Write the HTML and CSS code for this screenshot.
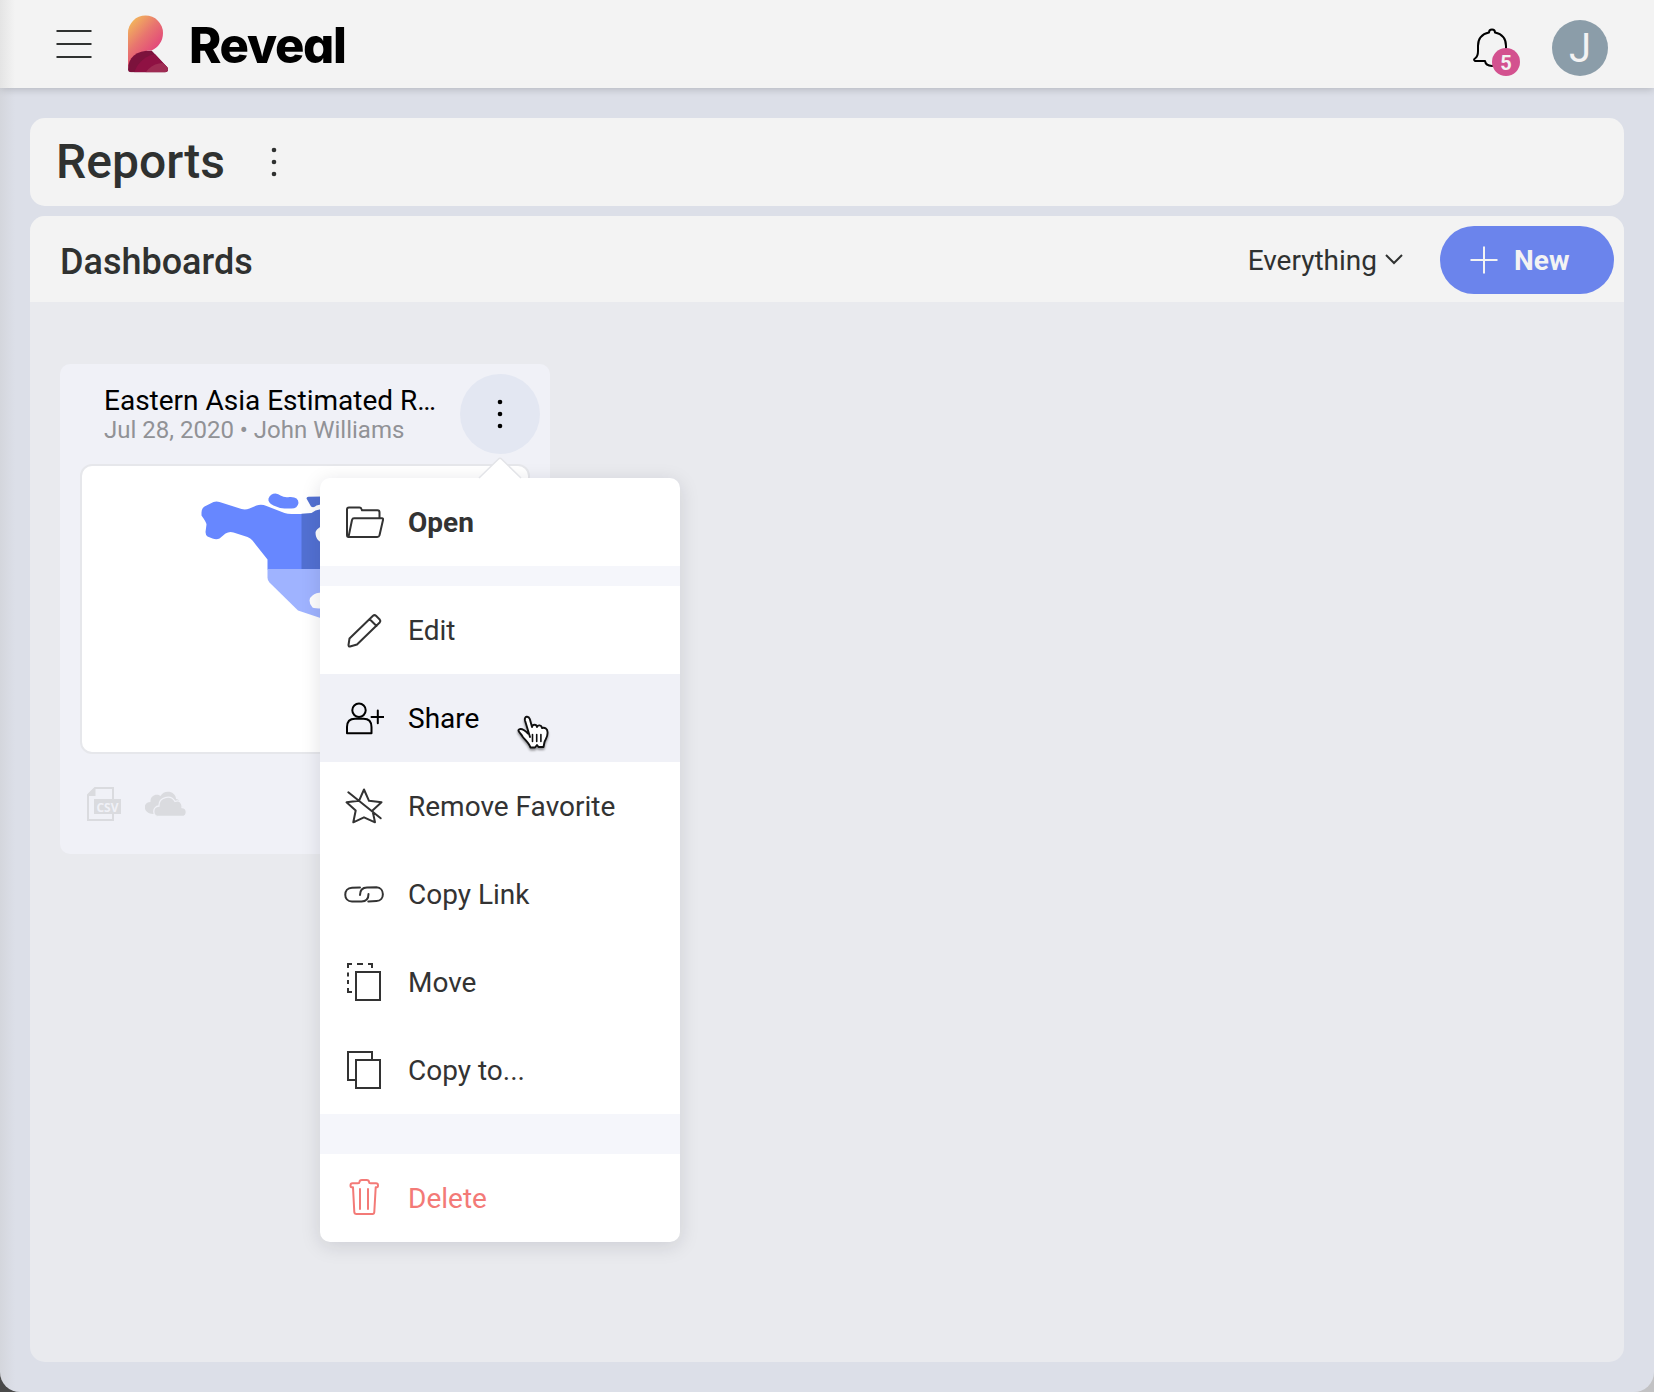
FILE: index.html
```html
<!DOCTYPE html>
<html lang="en">
<head>
<meta charset="utf-8">
<title>Reveal</title>
<link rel="stylesheet" href="styles.css">
</head>
<body>
<div class="window">
  <header class="topbar">
    <svg class="burger" width="36" height="28" viewBox="0 0 36 28" stroke="#2f3130" stroke-width="2"><path d="M.5 1h35M.5 14h35M.5 27h35"/></svg>
    <svg class="logo" width="40" height="58" viewBox="128 14.500 40 58">
      <defs>
        <linearGradient id="head" x1="130" y1="22" x2="158" y2="48" gradientUnits="userSpaceOnUse"><stop offset="0" stop-color="#f2b45c"/><stop offset=".5" stop-color="#e8756f"/><stop offset="1" stop-color="#e2457b"/></linearGradient>
        <clipPath id="leg"><path d="M128 69C128 57 136 50 151.500 50L167 66.500C169 69 168 71.800 165 71.800H131C129 71.800 128 70.500 128 69Z"/></clipPath>
      </defs>
      <path fill="url(#head)" d="M128 69V32.500A17.500 17.500 0 0 1 163 32.500C163 41 158 47 151.500 50C140 50 130 58 128 69Z"/>
      <g clip-path="url(#leg)"><path fill="#7c123c" d="M128 49h41v25h-41z"/><circle cx="160" cy="80" r="27" fill="#8f1143"/><circle cx="163" cy="83" r="20.500" fill="#9e2c53"/></g>
    </svg>
    <span class="brand">Reveal</span>
    <div class="bell">
      <svg width="36" height="42" viewBox="1472 27 36 42" fill="none" stroke="#000" stroke-width="2" stroke-linejoin="round"><path d="M1489 32.500C1489 28.500 1495 28.500 1495 32.500C1502 34 1506 39 1506 46V53C1506 56 1510 58 1510 61H1499C1498 67.500 1486 67.500 1485 61H1475C1473.500 60 1474 59 1475.500 58C1478 56 1478 54 1478 51V46C1478 39 1482 34 1489 32.500Z"/></svg>
      <span class="badge">5</span>
    </div>
    <div class="avatar">J</div>
  </header>

  <main class="content">
    <section class="titlebar">
      <h1>Reports</h1>
      <svg width="6" height="30" viewBox="0 0 6 30" fill="#2f3130"><circle cx="3" cy="3" r="2.300"/><circle cx="3" cy="15" r="2.300"/><circle cx="3" cy="27" r="2.300"/></svg>
    </section>

    <section class="panel">
      <div class="panel-head">
        <h2>Dashboards</h2>
        <span class="filter">Everything</span>
        <svg class="chevron" width="18" height="12" viewBox="0 0 18 12" fill="none" stroke="#2f3130" stroke-width="2"><path d="M1 1l8 8 8-8"/></svg>
        <button class="new"><svg width="28" height="28" viewBox="0 0 28 28" stroke="#f3f3f3" stroke-width="2"><path d="M14 .5v27M.5 14h27"/></svg><span>New</span></button>
      </div>
      <div class="panel-body">
        <article class="card">
          <div class="card-head">
            <div class="card-text">
              <div class="card-title">Eastern Asia Estimated R…</div>
              <div class="card-sub">Jul 28, 2020 • John Williams</div>
            </div>
            <div class="more">
              <svg width="6" height="30" viewBox="0 0 6 30"><circle cx="3" cy="3" r="2.300"/><circle cx="3" cy="15" r="2.300"/><circle cx="3" cy="27" r="2.300"/></svg>
            </div>
          </div>
          <div class="thumb">
            <svg width="446" height="286" viewBox="81.500 465.500 446 286">
              <path fill="#6787ff" d="M201 512Q201 508 204 506L213 501.500Q216 500.500 219 501.500L241 508.500Q245 509.500 249 508L256 505Q261 503.500 266 505.500L284 512.500Q287 513.500 291 513.500H302V569H267V559L252 540Q250 537.500 247 536.500L233 532Q229 530.500 225 533L219 538Q216 539.500 212 538L207 536Q205 534.500 205 531.500L206 524Q206 522 201 515Z"/>
              <path fill="#5270d2" d="M301 513.300L311 512.500 315 510 323 508V569H301Z"/>
              <path fill="#9fb3ff" d="M267 568.500H323V618.500L297.500 610 269 582Q267 580 267 577Z"/>
              <path fill="#6787ff" d="M275 493Q278 493.500 280 495Q284 497.500 289 496.500Q298 496 298 502.500Q297 508 291 508H284Q278 507.500 273 505Q267 502 268 498Q270 493 275 493Z"/>
              <path fill="#5270d2" d="M306 498Q306 496.300 308 496.300L322 496V503.500L316 505Q313 508 310.500 506Z"/>
              <path fill="#fff" d="M322 525Q315 529 315 532Q315 537 318 540L323 544ZM322 592Q315 592 312 595Q309 597 309 600Q309 604 312 607Q314 608 322 608Z"/>
            </svg>
          </div>
          <div class="card-foot">
            <svg width="36" height="36" viewBox="86 786 36 36"><path d="M95 788H113V820H88V795Z" fill="none" stroke="#dadbdf" stroke-width="2"/><path fill="#dadbdf" d="M87 796L95.500 787V796ZM94 799H121V814H94Z"/><text class="csv" x="96.500" y="811.500" textLength="22" lengthAdjust="spacingAndGlyphs">CSV</text></svg>
            <svg width="42" height="28" viewBox="145 790 42 28" fill="#dadbdf"><path d="M153 814C143 814 142 802 150.500 802C150 795 157 793 160.500 796C164 789 176 791 176 799C182 799 187 815 176 815Z"/><path stroke="#f0f1f7" stroke-width="1.300" d="M159 816.500C152 816.500 152 806.500 159 806C158.500 797 171 794 175 801.500C180 799 182.500 804 182 807.500C188 808 187.500 816.500 182 816.500Z"/></svg>
          </div>
          <div class="menu">
            <svg class="arrow" width="44" height="22" viewBox="0 0 44 22"><path d="M1 21L22 .9 43 21V22H1Z" fill="#fff"/><path d="M1 21L20.500 2Q22 .6 23.500 2L43 21" fill="none" stroke="#e3e4e8" stroke-width="1.500"/></svg>
            <div class="item open"><svg viewBox="0 0 40 40"><path d="M3 33V7.500Q3 5.500 5 5.500H15.500Q17 5.500 17.500 7L18 8.300H33.500Q35.500 8.300 35.500 10.500V16.300M4.500 35L8 18Q8.500 16.300 10 16.300H38Q39.500 16.300 39 18L35.500 33.300Q35 35 33.300 35H4.500Q3 35 3 33"/></svg><span>Open</span></div>
            <div class="gap"></div>
            <div class="item"><svg viewBox="0 0 40 40"><path d="M5.500 28.500L29 5.800Q30.500 4.500 32 5.800L35.700 9.500Q37 11 35.700 12.500L13 34.500 6 36.500Q4.500 36.700 4.500 35ZM25.500 9L32.500 16"/></svg><span>Edit</span></div>
            <div class="item hover"><svg viewBox="0 0 40 40"><circle cx="15" cy="12.300" r="6.700"/><path d="M3 35.300V29Q3 20.700 11 20.700H19.500Q27.500 20.700 27.500 29V35.300ZM27.500 19H40M33.800 12.500V25.300"/></svg><span>Share</span>
              <svg class="cursor" viewBox="517 714 34 38"><path fill="#fff" stroke="#111" stroke-width="1.900" stroke-linejoin="round" d="M530 737L525 720.500C524 716 528.500 715.500 529.800 719L532 727C532.500 724 536.500 724 537 727C538 724.500 541.500 725 542 728C545 727 547.500 729 547.500 732C548 737 545.500 739 544.500 742L543.500 747H538.500L537 745L535 747.500H530.500C529 743 525 740 522.500 736.500C521 733.500 517 731 519 729.500C521.500 728 524.500 730 528 733.500"/><path fill="none" stroke="#111" stroke-width="1.600" d="M532.500 734.500V741.500M536.700 734.500V741.500M540.900 734.500V741.500"/></svg>
            </div>
            <div class="item"><svg viewBox="0 0 40 40"><path d="M20 3.500L25 14.800 37.500 16.300 28.500 24.500 31 36.300 20 31.300 9.300 36.300 11.700 24.500 2.500 16.300 15 14.800ZM4.300 6.300L36.700 32.300"/></svg><span>Remove Favorite</span></div>
            <div class="item"><svg viewBox="0 0 40 40"><path d="M16 13.500L8 13.700C-1 14-1 27.500 8 27.500H17.500Q24.500 27.300 24.500 20M16 21Q16 13.700 23 13.500L32.500 13.300C41 13.500 41 27 32.500 27L24.300 27.500"/></svg><span>Copy Link</span></div>
            <div class="item"><svg class="square" viewBox="0 0 40 40"><path d="M12 10h24v28h-24zM8 2H4V6M13 2h6M24 2h4V6M4 10.500v4M4 18v4M4 26v4H8"/></svg><span>Move</span></div>
            <div class="item"><svg class="square" viewBox="0 0 40 40"><path d="M12 10h24v28h-24zM28 10V2H4V30H12"/></svg><span>Copy to...</span></div>
            <div class="gap wide"></div>
            <div class="item delete"><svg viewBox="0 0 40 40"><path d="M9 9.300L10.300 34Q10.400 36 12.500 36H28.500Q30.200 36 30.300 34L31.700 9.300M9 9.300H7.500Q6.500 9.300 6.500 7.500Q6.500 5.300 8.500 5.300H14Q15.500 5.300 15.500 4Q15.500 2 18 2H22.500Q25 2 25 4Q25 5.300 26.500 5.300H32Q34 5.300 34 7.500Q34 9.300 33 9.300H31.700M16 11V31M24 11V31"/></svg><span>Delete</span></div>
          </div>
        </article>
      </div>
    </section>
  </main>
</div>
</body>
</html>
```
FILE: styles.css
```css
* { box-sizing: border-box; }
body {
  margin: 0;
  background: linear-gradient(90deg, #4a4a4a 50%, #c2c2c4 50%);
  font-family: Roboto, "Liberation Sans", sans-serif;
  color: #2f3130;
}
svg { display: block; flex: none; }
h1, h2 { margin: 0; font-weight: 500; }

.window {
  position: relative;
  display: flex;
  flex-direction: column;
  height: 1392px;
  overflow: hidden;
  border-radius: 0 0 20px 20px;
  background: #dcdfe8;
}
/* soft shade along the window's left edge */
.window::after {
  content: "";
  position: absolute;
  inset: 0 auto 0 0;
  width: 15px;
  background: linear-gradient(90deg, rgba(190, 190, 190, .28), rgba(200, 200, 200, 0));
}

.topbar {
  display: flex;
  align-items: center;
  height: 88px;
  flex: none;
  padding: 0 46px 0 56px;
  background: #f3f3f3;
  box-shadow: 0 1px 8px rgba(0, 0, 0, .2);
}
.logo { margin-left: 36px; }
.brand {
  flex: 1;
  margin: 4px 0 0 21px;
  font: 800 49px/60px Inter, sans-serif;
  font-feature-settings: "cv11";
  letter-spacing: -1.3px;
  color: #000;
}
.bell { position: relative; margin: 8px 44px 0 0; }
.badge {
  position: absolute;
  left: 20px;
  top: 21px;
  width: 28px;
  height: 28px;
  border-radius: 50%;
  background: #d3518f;
  color: #f3f3f3;
  font: 700 20px/30px Roboto, sans-serif;
  text-align: center;
}
.avatar {
  width: 56px;
  height: 56px;
  margin-top: 8px;
  border-radius: 50%;
  background: #8b9da9;
  color: #f3f3f3;
  font-size: 40px;
  line-height: 58px;
  text-align: center;
}

.content {
  display: flex;
  flex: 1;
  flex-direction: column;
  gap: 10px;
  padding: 30px;
}
.titlebar {
  display: flex;
  align-items: center;
  gap: 46px;
  height: 88px;
  padding-left: 26px;
  border-radius: 15px;
  background: #f3f3f3;
}
h1 { font-size: 48px; line-height: 88px; }
.panel {
  display: flex;
  flex: 1;
  flex-direction: column;
  border-radius: 15px;
  background: #e9eaee;
}
.panel-head {
  display: flex;
  align-items: center;
  height: 86px;
  padding: 2px 10px 0 30px;
  border-radius: 15px 15px 0 0;
  background: #f3f3f3;
}
h2 { flex: 1; padding-top: 4px; font-size: 36px; }
.filter { font-size: 28px; }
.chevron { margin: 0 37px 0 8px; }
.new {
  display: flex;
  align-items: center;
  gap: 16px;
  width: 174px;
  height: 68px;
  padding: 0 0 0 30px;
  border: 0;
  border-radius: 34px;
  background: #6b84ec;
  color: #f3f3f3;
  font: 700 28px/68px Roboto, sans-serif;
}
.new span { padding-top: 1px; line-height: 67px; }
.panel-body { padding: 62px 30px; }

.card {
  position: relative;
  width: 490px;
  height: 490px;
  padding: 0 20px;
  border-radius: 10px;
  background: #f0f1f7;
}
.card-head {
  display: flex;
  justify-content: space-between;
  height: 100px;
  margin-right: -10px;
  padding: 10px 0 0 24px;
}
.card-text { padding-top: 11px; white-space: nowrap; }
.card-title { font-size: 28px; line-height: 32px; color: #000; }
.card-sub { font-size: 24px; line-height: 26px; color: #919296; }
.more {
  display: grid;
  place-items: center;
  width: 80px;
  height: 80px;
  border-radius: 50%;
  background: #e3e7f2;
}
.thumb {
  width: 450px;
  height: 290px;
  border: 2px solid #e6e7eb;
  border-radius: 12px;
  background: #fff;
}
.card-foot {
  display: flex;
  align-items: center;
  gap: 23px;
  height: 100px;
  padding-left: 6px;
}
.csv { font: 700 12.5px "Open Sans", sans-serif; fill: #f0f1f7; }

.menu {
  position: absolute;
  left: 260px;
  top: 114px;
  width: 360px;
  border-radius: 10px;
  background: #fff;
  box-shadow: 0 4px 20px rgba(20, 20, 40, .13);
}
.arrow { position: absolute; left: 158px; top: -21px; }
.item {
  position: relative;
  display: flex;
  align-items: center;
  gap: 24px;
  height: 88px;
  padding-left: 24px;
  color: #333;
  font-size: 28px;
}
.item > svg {
  width: 40px;
  height: 40px;
  fill: none;
  stroke: currentColor;
  stroke-width: 2;
  stroke-linecap: round;
  stroke-linejoin: round;
}
.item > .square { stroke-linecap: butt; stroke-linejoin: miter; }
.open { font-weight: 700; }
.hover { background: #f0f1f7; color: #000; }
.delete { color: #f37a77; }
.gap { height: 20px; background: #f5f6fb; }
.wide { height: 40px; }
.item > .cursor {
  position: absolute;
  left: 197px;
  top: 40px;
  width: 34px;
  height: 38px;
  filter: drop-shadow(0 2px 1px rgba(0, 0, 0, .4));
}
```
